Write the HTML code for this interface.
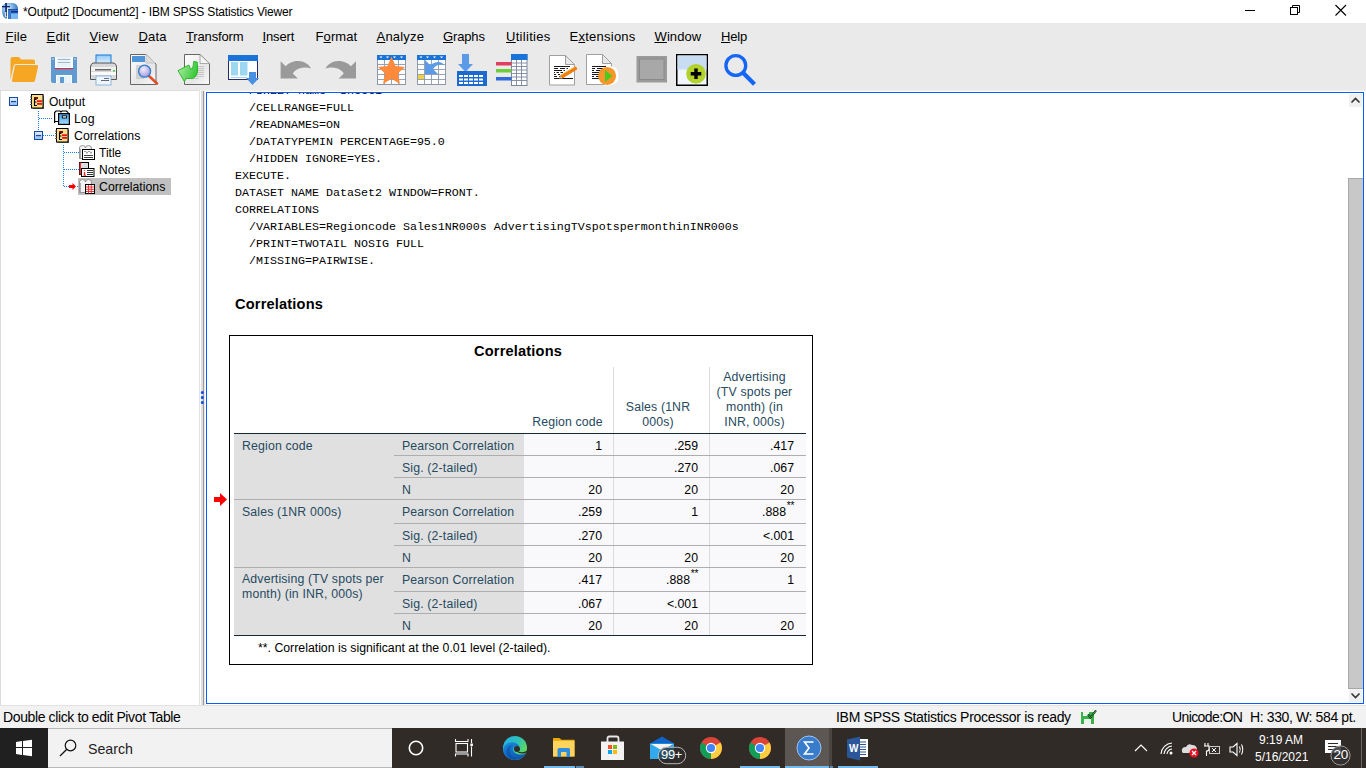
<!DOCTYPE html>
<html><head><meta charset="utf-8">
<style>
*{margin:0;padding:0;box-sizing:border-box}
html,body{width:1366px;height:768px;overflow:hidden;background:#fff;font-family:"Liberation Sans",sans-serif;position:relative}
.a{position:absolute}
.t{position:absolute;white-space:nowrap;line-height:20px}
.mi{position:absolute;top:27px;font-size:13px;letter-spacing:-0.15px;color:#000;white-space:nowrap;line-height:20px}
.mi u{text-decoration:underline;text-underline-offset:1px;text-decoration-thickness:1px}
</style></head><body>
<div class="a" style="left:0;top:0;width:1366px;height:23px;background:#fff"></div>
<div class="a" style="left:0;top:23px;width:1366px;height:67px;background:#eaeaea"></div>
<div class="a" style="left:0;top:90px;width:1366px;height:615px;background:#f0f0f0"></div>
<div class="a" style="left:0;top:90px;width:199px;height:615px;background:#fff;border-left:1px solid #dcdcdc;border-top:1px solid #dcdcdc"></div>
<div class="a" style="left:199px;top:90px;width:1px;height:615px;background:#e3e3e3"></div>
<div class="a" style="left:200px;top:90px;width:1px;height:615px;background:#fff"></div>
<div class="a" style="left:201px;top:91px;width:2px;height:614px;background:#dedede"></div>
<div class="a" style="left:203px;top:91px;width:1px;height:614px;background:#9a9a9a"></div>
<div class="a" style="left:204px;top:91px;width:1px;height:614px;background:#e8e8e8"></div>
<div class="a" style="left:205px;top:91px;width:1361px;height:614px;background:#fff"></div>
<div class="a" style="left:206px;top:92px;width:1158px;height:612px;border:1px solid #0a5cff;background:#fff"></div>
<!-- TITLE BAR -->
<svg class="a" style="left:0;top:0" width="22" height="22" viewBox="0 0 22 22">
 <defs><radialGradient id="tg" cx="0.35" cy="0.3" r="0.8"><stop offset="0" stop-color="#d8ecfb"/><stop offset="0.5" stop-color="#6ea6dc"/><stop offset="1" stop-color="#1e5cae"/></radialGradient></defs>
 <path d="M2 7 Q3 3 8 3 H12 Q17 3 18 8 V19 H8 Q2 18 2 11 Z" fill="url(#tg)"/>
 <rect x="8" y="9" width="10" height="1" fill="#1e4fa0"/>
 <rect x="8" y="10" width="10" height="9" fill="#3c78c8"/>
 <rect x="11" y="11" width="7" height="1.5" fill="#0b2c84"/>
 <rect x="11" y="13.5" width="7" height="5.5" fill="#7ab8f5"/>
 <rect x="7" y="9" width="1" height="10" fill="#fff"/>
 <rect x="5.2" y="3" width="1.7" height="13" fill="#0b2270"/>
 <rect x="2" y="6" width="8" height="1.3" fill="#0b2270"/>
 <rect x="5.2" y="12" width="1" height="5" fill="#fff"/>
</svg>
<div class="a" style="left:23px;top:2px;font-size:12px;letter-spacing:-0.16px;line-height:20px;color:#000;white-space:nowrap">*Output2 [Document2] - IBM SPSS Statistics Viewer</div>
<svg class="a" style="left:1230px;top:0" width="136" height="22" viewBox="1230 0 136 22">
 <rect x="1245" y="10" width="10" height="1" fill="#000"/>
 <rect x="1290.5" y="7.5" width="7" height="7" fill="none" stroke="#000" stroke-width="1"/>
 <path d="M1292.5 7.5 V5.5 H1299.5 V12.5 H1297.5" fill="none" stroke="#000" stroke-width="1"/>
 <path d="M1335.5 5 L1346 15.5 M1346 5 L1335.5 15.5" stroke="#000" stroke-width="1.1"/>
</svg>
<!-- MENU -->
<div class="mi" style="left:5.5px;letter-spacing:0.2px"><u>F</u>ile</div>
<div class="mi" style="left:46.5px;letter-spacing:0.2px"><u>E</u>dit</div>
<div class="mi" style="left:89.5px;letter-spacing:0.35px"><u>V</u>iew</div>
<div class="mi" style="left:138.5px;letter-spacing:0.2px"><u>D</u>ata</div>
<div class="mi" style="left:186px"><u>T</u>ransform</div>
<div class="mi" style="left:262.5px"><u>I</u>nsert</div>
<div class="mi" style="left:315.5px;letter-spacing:0.1px">F<u>o</u>rmat</div>
<div class="mi" style="left:376.5px;letter-spacing:0.2px"><u>A</u>nalyze</div>
<div class="mi" style="left:443px"><u>G</u>raphs</div>
<div class="mi" style="left:506px;letter-spacing:0.3px"><u>U</u>tilities</div>
<div class="mi" style="left:569.5px;letter-spacing:0.25px">E<u>x</u>tensions</div>
<div class="mi" style="left:654.5px;letter-spacing:0.1px"><u>W</u>indow</div>
<div class="mi" style="left:721px"><u>H</u>elp</div>
<!-- TOOLBAR -->
<svg class="a" style="left:0;top:48px" width="770" height="42" viewBox="0 48 770 42">
 <defs>
  <linearGradient id="pg" x1="0" y1="0" x2="1" y2="1"><stop offset="0" stop-color="#fff"/><stop offset="0.6" stop-color="#e6e6e6"/><stop offset="1" stop-color="#fafafa"/></linearGradient>
  <linearGradient id="bl" x1="0" y1="0" x2="0" y2="1"><stop offset="0" stop-color="#8cc8f8"/><stop offset="1" stop-color="#eef8ff"/></linearGradient>
  <linearGradient id="gr" x1="0" y1="0.3" x2="1" y2="0.7"><stop offset="0" stop-color="#a8eca0"/><stop offset="1" stop-color="#2cc42c"/></linearGradient>
  <radialGradient id="mg" cx="0.4" cy="0.35" r="0.7"><stop offset="0" stop-color="#f4f0ff"/><stop offset="1" stop-color="#9f90d8"/></radialGradient>
 </defs>
 <!-- open folder -->
 <path d="M10.5 59 Q10.5 57 12.5 57 H19 L21 59.5 H33.5 Q35 59.5 35 61 V64 H16 Q14 64 13.5 66 L10.5 80 Z" fill="#f5a623"/>
 <path d="M15 65 H37 Q38.5 65 38 67 L35 80.5 Q34.5 82 33 82 H13.5 Q12 82 12 80.5 Z" fill="#f5a623"/>
 <!-- save -->
 <path d="M51 57 H77 V83 H52.5 L51 81.5 Z" fill="#5f9bd0"/>
 <rect x="55" y="57" width="18" height="11" fill="#fff"/>
 <rect x="57" y="57" width="14" height="10" fill="#e6f2fc"/>
 <rect x="58" y="59" width="12" height="1" fill="#aab4bc"/><rect x="58" y="62" width="12" height="1" fill="#aab4bc"/>
 <rect x="55" y="68" width="18" height="1.2" fill="#d9304a"/>
 <rect x="56" y="75" width="16" height="8" fill="#fff"/><rect x="57" y="76" width="14" height="7" fill="#e6f2fc"/>
 <rect x="60" y="77" width="4" height="6" fill="#5f9bd0"/>
 <rect x="52" y="58.5" width="2" height="1" fill="#cfe3f5"/><rect x="74" y="58.5" width="2" height="1" fill="#cfe3f5"/>
 <!-- printer -->
 <rect x="96" y="55" width="15" height="10" fill="url(#bl)" stroke="#1a78d8" stroke-width="1"/>
 <path d="M93 63 H114 Q116.5 64 116.5 67 V79.5 H90.5 V67 Q90.5 64 93 63 Z" fill="#d8d8d8" stroke="#555" stroke-width="1"/>
 <rect x="91" y="67" width="25" height="4" fill="#f2f2f2"/>
 <rect x="95" y="69" width="16" height="1.5" fill="#666"/>
 <rect x="113" y="70" width="2" height="1.5" fill="#3ecf3e"/>
 <rect x="91" y="72" width="25" height="3" fill="#fafafa"/>
 <rect x="96" y="76" width="15" height="9" fill="#eef6ff" stroke="#7aa8d8" stroke-width="0.8"/>
 <rect x="101" y="80" width="8" height="1" fill="#667"/><rect x="104" y="78" width="5" height="1" fill="#667"/>
 <!-- print preview -->
 <path d="M130.5 54.5 H146 L156 64 V84.5 H130.5 Z" fill="url(#pg)" stroke="#666" stroke-width="1"/>
 <path d="M146 54.5 V63 H155.5" fill="#ddd" stroke="#bbb" stroke-width="0.8"/>
 <rect x="132" y="56" width="13" height="6" fill="#4f95d8"/>
 <g stroke="#aaa" stroke-width="0.8"><path d="M136 66 H141 M136 68 H140 M136 70 H140 M136 72 H140 M136 74 H140 M136 76 H141 M136 78 H144"/></g>
 <path d="M149 76 L157 83.5" stroke="#e0502a" stroke-width="2.6" stroke-linecap="round"/>
 <circle cx="144.6" cy="71.2" r="6" fill="url(#mg)" stroke="#2f7fd0" stroke-width="1.3"/>
 <!-- export doc w/ green arrow -->
 <path d="M184.5 54.5 H200 L209.5 63.5 V84.5 H184.5 Z" fill="url(#pg)" stroke="#666" stroke-width="1"/>
 <path d="M200 54.5 V63.5 H209.5 Z" fill="#f4f4f4" stroke="#999" stroke-width="0.8"/>
 <g stroke="#bbb" stroke-width="0.8"><path d="M197 66.5 H204 M197 68.5 H204 M197 70.5 H204 M197 72.5 H204 M196 74.5 H204 M195 76.5 H204 M193 78.5 H199"/></g>
 <path d="M178 70.6 L188.8 65 L190.6 69 Q192.8 69.5 193.2 66 L193.7 61.5 L197.2 62 L197.7 70 Q197.5 76 192.8 78.5 L186.2 78.5 L184.4 81.6 Z" fill="url(#gr)" stroke="#22b022" stroke-width="0.9"/>
 <!-- window w/ arrow -->
 <rect x="228.5" y="55.5" width="29" height="24" fill="#fff" stroke="#262b6b" stroke-width="1"/>
 <rect x="228" y="55" width="30" height="6" fill="#1a73d9"/>
 <rect x="231" y="62" width="7" height="13.5" fill="#9dd8f0"/><rect x="240" y="62" width="7.5" height="13.5" fill="#9dd8f0"/>
 <rect x="231" y="77" width="16" height="1" fill="#9dd8f0"/>
 <path d="M249 72 H256 V78 H259 L252.5 85 L246 78 H249 Z" fill="#4a90e2"/>
 <!-- undo / redo -->
 <path id="undo" d="M280.6 61.3 L285.7 66.2 C289 62.5 294 61 298 61 C304 61 309 64.5 311 68.4 C307 67 303 67.2 299 68.5 C296 69.5 294 71.5 292.8 73.5 L297.9 78.6 L280.6 78.6 Z" fill="#9a9a9a"/>
 <path d="M280.6 61.3 L285.7 66.2 C289 62.5 294 61 298 61 C304 61 309 64.5 311 68.4 C307 67 303 67.2 299 68.5 C296 69.5 294 71.5 292.8 73.5 L297.9 78.6 L280.6 78.6 Z" fill="#9a9a9a" transform="translate(636.6 0) scale(-1 1)"/>
 <!-- star grid -->
 <rect x="377.5" y="55.5" width="28" height="29" fill="#fff" stroke="#8b97ad" stroke-width="1"/>
 <g stroke="#8b97ad" stroke-width="0.9"><path d="M377 64.5 H406 M377 69.5 H406 M377 74.5 H406 M377 79.5 H406 M384.5 59 V85 M391.5 59 V85 M398.5 59 V85"/></g>
 <rect x="377" y="55" width="29" height="5" fill="#1a73d9"/>
 <g fill="#fff"><path d="M379.5 56.5 h3 l-1.5 1.8z M386 56.5 h3 l-1.5 1.8z M393 56.5 h3 l-1.5 1.8z M400 56.5 h3 l-1.5 1.8z"/></g>
 <path d="M391.5 56.5 L395.5 66 L405 67 L397.8 73.5 L400 84 L391.5 78.8 L383 84 L385.2 73.5 L378 67 L387.5 66 Z" fill="#ff8a3c"/>
 <!-- grid w/ arrow -->
 <rect x="417.5" y="55.5" width="28" height="29" fill="#fff" stroke="#8b97ad" stroke-width="1"/>
 <g stroke="#8b97ad" stroke-width="0.9"><path d="M417 64.5 H446 M417 69.5 H446 M417 74.5 H446 M417 79.5 H446 M424.5 59 V85 M431.5 59 V85 M438.5 59 V85"/></g>
 <rect x="417" y="55" width="29" height="5" fill="#1a73d9"/>
 <g fill="#fff"><path d="M419.5 56.5 h3 l-1.5 1.8z M426 56.5 h3 l-1.5 1.8z M433 56.5 h3 l-1.5 1.8z M440 56.5 h3 l-1.5 1.8z"/></g>
 <rect x="418" y="75" width="6" height="4" fill="#f2d23c"/>
 <path d="M425 60 L425 74 L438 74 L433 69 Q437 63 444 65 Q440 59 430 65 Z" fill="#5a9ae6"/>
 <!-- download into grid -->
 <path d="M462 54 H469 V64 H473 L465.5 72 L458 64 H462 Z" fill="#5a9ae6"/>
 <rect x="457" y="71" width="30" height="15" fill="#1a6ad0"/>
 <g fill="#fff"><path d="M459 75h4v2h-4zM464 75h4v2h-4zM469 75h4v2h-4zM474 75h4v2h-4zM479 75h4v2h-4zM459 78.5h4v2h-4zM464 78.5h4v2h-4zM469 78.5h4v2h-4zM474 78.5h4v2h-4zM479 78.5h4v2h-4zM459 82h4v2h-4zM464 82h4v2h-4zM469 82h4v2h-4zM474 82h4v2h-4zM479 82h4v2h-4z"/></g>
 <!-- colored bars grid -->
 <rect x="511.5" y="54.5" width="15.5" height="31" fill="#fff" stroke="#7b87a0" stroke-width="1"/>
 <rect x="511" y="54" width="16.5" height="6" fill="#1a73d9"/>
 <g stroke="#7b87a0" stroke-width="0.9"><path d="M511 63 H527 M511 66.5 H527 M511 70 H527 M511 73.5 H527 M511 77 H527 M511 80.5 H527 M516.5 60 V86 M521.5 60 V86"/></g>
 <rect x="496" y="62" width="15.5" height="3.5" fill="#e0405e"/>
 <rect x="496" y="69" width="15.5" height="3.5" fill="#6ccd3a"/>
 <rect x="496" y="77" width="15.5" height="3.5" fill="#2e6bd8"/>
 <!-- doc pencil -->
 <path d="M549.5 55.5 H565.5 L574.5 64.5 V85 H549.5 Z" fill="#fff" stroke="#a0a0a0" stroke-width="1"/>
 <path d="M565.5 55.5 V64.5 H574.5 Z" fill="#e8e8e8" stroke="#a0a0a0" stroke-width="1"/>
 <g stroke="#1a1a1a" stroke-width="1.1"><path d="M554 66.5 H570 M554 68.5 H558 M560 68.5 H565 M566.5 68.5 H568 M554 70.5 H562 M563.5 70.5 H565 M554 72.5 H555 M556.5 72.5 H559 M560.5 72.5 H563 M554 74.5 H556 M558 74.5 H560 M554 76.5 H557 M559 76.5 H561 M554 78.5 H573"/></g>
 <path d="M560 75.5 L575 66.5 Q577.5 67 577 69.5 L562.5 78.5 Z" fill="#f07d10"/>
 <path d="M561 75 L575 66.8" stroke="#fbbf50" stroke-width="0.9"/>
 <path d="M560 75.5 L562.5 78.5 L559 78.5 Z" fill="#d8b890"/>
 <!-- doc play -->
 <path d="M586.5 54.5 H602.5 L611.5 63.5 V84.5 H586.5 Z" fill="#fff" stroke="#a0a0a0" stroke-width="1"/>
 <path d="M602.5 54.5 V63.5 H611.5 Z" fill="#e8e8e8" stroke="#a0a0a0" stroke-width="1"/>
 <g stroke="#1a1a1a" stroke-width="1.1"><path d="M592 66.5 H606 M592 68.5 H595 M597 68.5 H603 M592 70.5 H594 M596 70.5 H601 M592 72.5 H600 M592 74.5 H599 M592 76.5 H594 M596 76.5 H600 M592 78.5 H600"/></g>
 <path d="M611.5 66 Q618.5 67 618.5 76 Q618.5 85 609 85.5 H604 Z" fill="#fff"/>
 <circle cx="607.1" cy="75.9" r="9" fill="#f7962b"/>
 <path d="M605 70 L612.3 76 L605 82 Z" fill="#46cc1e"/>
 <!-- gray box -->
 <rect x="636.5" y="56" width="30.5" height="26.5" fill="#9a9a9a"/>
 <rect x="639.5" y="59" width="24.5" height="20.5" fill="#a8a8a8" stroke="#8a8a8a" stroke-width="1"/>
 <!-- box w/ plus -->
 <rect x="676" y="54" width="32" height="32" fill="#000"/>
 <rect x="677.5" y="55.5" width="29" height="29" fill="#f0f6fc"/>
 <rect x="677.5" y="55.5" width="29" height="14" fill="#c8dcf2"/>
 <circle cx="696" cy="73.8" r="9.8" fill="#b4d22c"/>
 <path d="M694.3 68.5 H697.7 V72.1 H701.3 V75.5 H697.7 V79.1 H694.3 V75.5 H690.7 V72.1 H694.3 Z" fill="#000"/>
 <!-- search -->
 <circle cx="735.8" cy="65.5" r="9.9" fill="none" stroke="#1466f5" stroke-width="3.3"/>
 <path d="M743 72.8 L754.5 84.3" stroke="#1466f5" stroke-width="4.2" stroke-linecap="butt"/>
</svg>
<!-- TREE -->
<div class="a" style="left:78px;top:178px;width:93px;height:17px;background:#c0c0c0"></div>
<svg class="a" style="left:0;top:90px" width="199" height="110" viewBox="0 90 199 110">
 <defs>
  <linearGradient id="ex" x1="0" y1="0" x2="0" y2="1"><stop offset="0" stop-color="#e6f1fd"/><stop offset="1" stop-color="#8fbdf0"/></linearGradient>
  <linearGradient id="bb" x1="0" y1="0" x2="0" y2="1"><stop offset="0" stop-color="#3a9ae8"/><stop offset="1" stop-color="#a8e0fc"/></linearGradient>
 </defs>
 <!-- dotted lines -->
 <g stroke="#1e7be6" stroke-width="1" stroke-dasharray="1 1">
  <path d="M38.5 111 V130"/><path d="M39 118.5 H53"/><path d="M43 135.5 H54"/>
  <path d="M63.5 145 V187"/><path d="M64 152.5 H79"/><path d="M64 169.5 H79"/><path d="M64 186.5 H69"/><path d="M77 186.5 H79"/>
 </g>
 <!-- expanders -->
 <rect x="9.5" y="97.5" width="8" height="8" fill="url(#ex)" stroke="#1848a8" stroke-width="1"/>
 <rect x="11" y="101" width="5" height="1.2" fill="#1848a8"/>
 <rect x="34.5" y="131.5" width="8" height="8" fill="url(#ex)" stroke="#1848a8" stroke-width="1"/>
 <rect x="36" y="135" width="5" height="1.2" fill="#1848a8"/>
 <!-- output book icons -->
 <g id="bk1">
  <rect x="31.5" y="94.5" width="11.5" height="13.5" fill="#f9e08e" stroke="#000" stroke-width="1"/>
  <path d="M43.5 95.5 V108.5 H32.5" fill="none" stroke="#333" stroke-width="1"/>
  <path d="M30 97 h2 M30 99.5 h2 M30 102 h2 M30 104.5 h2" stroke="#555" stroke-width="1"/>
  <rect x="34" y="97" width="4" height="2" fill="#7a0c0c"/>
  <path d="M34.5 99 V105.5 H37 M34.5 102 H36.5 M34.5 99.5 H36.5" stroke="#000" stroke-width="1.1" fill="none"/>
  <rect x="37" y="100.3" width="5" height="1.8" fill="#ee1111"/><rect x="37" y="103" width="5" height="1.8" fill="#ee1111"/>
 </g>
 <g transform="translate(25 34)">
  <rect x="31.5" y="94.5" width="11.5" height="13.5" fill="#f9e08e" stroke="#000" stroke-width="1"/>
  <path d="M43.5 95.5 V108.5 H32.5" fill="none" stroke="#333" stroke-width="1"/>
  <path d="M30 97 h2 M30 99.5 h2 M30 102 h2 M30 104.5 h2" stroke="#555" stroke-width="1"/>
  <rect x="34" y="97" width="4" height="2" fill="#7a0c0c"/>
  <path d="M34.5 99 V105.5 H37 M34.5 102 H36.5 M34.5 99.5 H36.5" stroke="#000" stroke-width="1.1" fill="none"/>
  <rect x="37" y="100.3" width="5" height="1.8" fill="#ee1111"/><rect x="37" y="103" width="5" height="1.8" fill="#ee1111"/>
 </g>
 <!-- log icon -->
 <path d="M54.6 123 V112.5 L56 111 H60 L61 112 L62 111 H66.5 L68 112.5 V114" fill="#fff" stroke="#000" stroke-width="1.2"/>
 <path d="M54.6 121.5 H58.5" stroke="#000" stroke-width="1"/>
 <rect x="58.6" y="113.6" width="10.8" height="10.8" fill="url(#bb)" stroke="#000" stroke-width="1.2"/>
 <rect x="62.3" y="115.8" width="4.2" height="2.2" fill="#fff" stroke="#000" stroke-width="0.9"/>
 <!-- title icon -->
 <path d="M79.5 158.5 V148 Q79.5 145.5 82.5 145.5 Q85.5 145.5 85.5 148 Q85.5 145.5 88.5 145.5 Q91.5 145.5 91.5 148 V149.5 H82.5 V158.5 Z" fill="#f2f2f2" stroke="#8a8a8a" stroke-width="0.9"/>
 <path d="M80 149 V158.5" stroke="#9a9a9a" stroke-width="1.6"/>
 <rect x="82.5" y="149.5" width="12" height="10" fill="#fff" stroke="#000" stroke-width="1"/>
 <path d="M84 151.5 h2 l1 2 l1 -2 h2 l1 2 l1 -2" stroke="#666" stroke-width="0.6" fill="none"/>
 <path d="M84 155.5 h9 M84 157.5 h9" stroke="#444" stroke-width="1"/>
 <!-- notes icon -->
 <rect x="79.5" y="162.5" width="9" height="12" fill="#ddd" stroke="#000" stroke-width="1"/>
 <rect x="79.5" y="162.5" width="1.5" height="12" fill="#e33"/>
 
 <rect x="81.5" y="168.5" width="12.5" height="8" fill="#fff" stroke="#000" stroke-width="1"/>
 <path d="M84.5 170 v0.8 M84.5 172 v3" stroke="#e22" stroke-width="1.3"/><path d="M83.5 175.3 h2.5" stroke="#e22" stroke-width="0.9"/>
 <path d="M87 170.5 h6 M87 172.5 h6 M87 174.5 h6" stroke="#333" stroke-width="1"/>
 <!-- red arrow -->
 <path d="M69 185 H72.5 V183 L76 186.5 L72.5 190 V188 H69 Z" fill="#f00"/>
 <!-- correlations table icon -->
 <path d="M79.5 192.5 V182 Q79.5 179.5 82.5 179.5 Q85.5 179.5 85.5 182 Q85.5 179.5 88.5 179.5 Q91.5 179.5 91.5 182 V186 H85.5 V192.5 Z" fill="#f2f2f2" stroke="#8a8a8a" stroke-width="0.9"/>
 <path d="M80 183 V192.5" stroke="#9a9a9a" stroke-width="1.6"/>
 <rect x="85.5" y="184.5" width="9" height="9" fill="#fff" stroke="#000" stroke-width="1"/>
 <path d="M86 187 h8 M86 189.3 h8 M86 191.5 h8 M88.5 185 v8.5 M91.3 185 v8.5" stroke="#e22" stroke-width="0.9"/>
</svg>
<div class="a" style="left:49px;top:95px;font-size:12px;line-height:15px;white-space:nowrap">Output</div>
<div class="a" style="left:74px;top:112px;font-size:12.3px;line-height:15px;white-space:nowrap">Log</div>
<div class="a" style="left:74px;top:129px;font-size:12.3px;line-height:15px;white-space:nowrap">Correlations</div>
<div class="a" style="left:99px;top:146px;font-size:12px;line-height:15px;white-space:nowrap">Title</div>
<div class="a" style="left:99px;top:163px;font-size:12px;line-height:15px;white-space:nowrap">Notes</div>
<div class="a" style="left:99px;top:180px;font-size:12.3px;line-height:15px;white-space:nowrap">Correlations</div>
<!-- splitter grip dots -->
<svg class="a" style="left:199px;top:388px" width="6" height="20" viewBox="0 0 6 20"><g fill="#0a50f0"><circle cx="3.3" cy="4.5" r="1.5"/><circle cx="3.3" cy="9.5" r="1.5"/><circle cx="3.3" cy="14.5" r="1.5"/></g></svg>
<div class="a" id="vc" style="left:207px;top:93px;width:1156px;height:610px;overflow:hidden"><div class="a" style="left:-207px;top:-93px;width:1366px;height:768px">
<div class="a" style="left:229px;top:335px;width:584px;height:330px;border:1px solid #000;background:#fff"></div>
<div class="a" style="left:234px;top:434px;width:290px;height:201px;background:#e0e0e0"></div>
<div class="a" style="left:524px;top:434px;width:282px;height:201px;background:#f9f9fb"></div>
<div class="a" style="left:613px;top:367px;width:1px;height:268px;background:#dcdcdc"></div>
<div class="a" style="left:709px;top:367px;width:1px;height:268px;background:#dcdcdc"></div>
<div class="a" style="left:234px;top:433px;width:572px;height:1px;background:#152935"></div>
<div class="a" style="left:234px;top:635px;width:572px;height:1px;background:#152935"></div>
<div class="a" style="left:394px;top:455px;width:412px;height:1px;background:#aeaeae"></div>
<div class="a" style="left:394px;top:477px;width:412px;height:1px;background:#aeaeae"></div>
<div class="a" style="left:394px;top:523px;width:412px;height:1px;background:#aeaeae"></div>
<div class="a" style="left:394px;top:545px;width:412px;height:1px;background:#aeaeae"></div>
<div class="a" style="left:394px;top:591px;width:412px;height:1px;background:#aeaeae"></div>
<div class="a" style="left:394px;top:613px;width:412px;height:1px;background:#aeaeae"></div>
<div class="a" style="left:234px;top:499px;width:572px;height:1px;background:#aeaeae"></div>
<div class="a" style="left:234px;top:567px;width:572px;height:1px;background:#aeaeae"></div>
<svg class="a" style="left:212px;top:493px" width="16" height="14" viewBox="0 0 16 14"><path d="M2 4 H8 V0 L15 6.5 L8 13 V9 H2 Z" fill="#f00"/></svg>
<div class="t" style="top:81px;font-family:'Liberation Mono';font-size:11.67px;font-weight:400;color:#000;left:249px;">/SHEET name=&#x27;Sheet1&#x27;</div>
<div class="t" style="top:98px;font-family:'Liberation Mono';font-size:11.67px;font-weight:400;color:#000;left:249px;">/CELLRANGE=FULL</div>
<div class="t" style="top:115px;font-family:'Liberation Mono';font-size:11.67px;font-weight:400;color:#000;left:249px;">/READNAMES=ON</div>
<div class="t" style="top:132px;font-family:'Liberation Mono';font-size:11.67px;font-weight:400;color:#000;left:249px;">/DATATYPEMIN PERCENTAGE=95.0</div>
<div class="t" style="top:149px;font-family:'Liberation Mono';font-size:11.67px;font-weight:400;color:#000;left:249px;">/HIDDEN IGNORE=YES.</div>
<div class="t" style="top:166px;font-family:'Liberation Mono';font-size:11.67px;font-weight:400;color:#000;left:235px;">EXECUTE.</div>
<div class="t" style="top:183px;font-family:'Liberation Mono';font-size:11.67px;font-weight:400;color:#000;left:235px;">DATASET NAME DataSet2 WINDOW=FRONT.</div>
<div class="t" style="top:200px;font-family:'Liberation Mono';font-size:11.67px;font-weight:400;color:#000;left:235px;">CORRELATIONS</div>
<div class="t" style="top:217px;font-family:'Liberation Mono';font-size:11.67px;font-weight:400;color:#000;left:249px;">/VARIABLES=Regioncode Sales1NR000s AdvertisingTVspotspermonthinINR000s</div>
<div class="t" style="top:234px;font-family:'Liberation Mono';font-size:11.67px;font-weight:400;color:#000;left:249px;">/PRINT=TWOTAIL NOSIG FULL</div>
<div class="t" style="top:251px;font-family:'Liberation Mono';font-size:11.67px;font-weight:400;color:#000;left:249px;">/MISSING=PAIRWISE.</div>
<div class="t" style="top:294px;font-family:'Liberation Sans';font-size:14.6px;font-weight:700;color:#000;letter-spacing:0.17px;left:235px;">Correlations</div>
<div class="t" style="top:341px;font-family:'Liberation Sans';font-size:14.6px;font-weight:700;color:#000;letter-spacing:0.17px;left:368.0px;width:300px;text-align:center;">Correlations</div>
<div class="t" style="top:412px;font-family:'Liberation Sans';font-size:12.3px;font-weight:400;color:#264a60;letter-spacing:0.15px;left:417.5px;width:300px;text-align:center;">Region code</div>
<div class="t" style="top:397px;font-family:'Liberation Sans';font-size:12.3px;font-weight:400;color:#264a60;letter-spacing:0.15px;left:508.0px;width:300px;text-align:center;">Sales (1NR</div>
<div class="t" style="top:412px;font-family:'Liberation Sans';font-size:12.3px;font-weight:400;color:#264a60;letter-spacing:0.15px;left:508.0px;width:300px;text-align:center;">000s)</div>
<div class="t" style="top:367px;font-family:'Liberation Sans';font-size:12.3px;font-weight:400;color:#264a60;letter-spacing:0.15px;left:604.5px;width:300px;text-align:center;">Advertising</div>
<div class="t" style="top:382px;font-family:'Liberation Sans';font-size:12.3px;font-weight:400;color:#264a60;letter-spacing:0.15px;left:604.5px;width:300px;text-align:center;">(TV spots per</div>
<div class="t" style="top:397px;font-family:'Liberation Sans';font-size:12.3px;font-weight:400;color:#264a60;letter-spacing:0.15px;left:604.5px;width:300px;text-align:center;">month) (in</div>
<div class="t" style="top:412px;font-family:'Liberation Sans';font-size:12.3px;font-weight:400;color:#264a60;letter-spacing:0.15px;left:604.5px;width:300px;text-align:center;">INR, 000s)</div>
<div class="t" style="top:436px;font-family:'Liberation Sans';font-size:12.3px;font-weight:400;color:#264a60;letter-spacing:0.15px;left:402px;">Pearson Correlation</div>
<div class="t" style="top:458px;font-family:'Liberation Sans';font-size:12.3px;font-weight:400;color:#264a60;letter-spacing:0.15px;left:402px;">Sig. (2-tailed)</div>
<div class="t" style="top:480px;font-family:'Liberation Sans';font-size:12.3px;font-weight:400;color:#264a60;letter-spacing:0.15px;left:402px;">N</div>
<div class="t" style="top:502px;font-family:'Liberation Sans';font-size:12.3px;font-weight:400;color:#264a60;letter-spacing:0.15px;left:402px;">Pearson Correlation</div>
<div class="t" style="top:526px;font-family:'Liberation Sans';font-size:12.3px;font-weight:400;color:#264a60;letter-spacing:0.15px;left:402px;">Sig. (2-tailed)</div>
<div class="t" style="top:548px;font-family:'Liberation Sans';font-size:12.3px;font-weight:400;color:#264a60;letter-spacing:0.15px;left:402px;">N</div>
<div class="t" style="top:570px;font-family:'Liberation Sans';font-size:12.3px;font-weight:400;color:#264a60;letter-spacing:0.15px;left:402px;">Pearson Correlation</div>
<div class="t" style="top:594px;font-family:'Liberation Sans';font-size:12.3px;font-weight:400;color:#264a60;letter-spacing:0.15px;left:402px;">Sig. (2-tailed)</div>
<div class="t" style="top:616px;font-family:'Liberation Sans';font-size:12.3px;font-weight:400;color:#264a60;letter-spacing:0.15px;left:402px;">N</div>
<div class="t" style="top:436px;font-family:'Liberation Sans';font-size:12.3px;font-weight:400;color:#264a60;letter-spacing:0.15px;left:242px;">Region code</div>
<div class="t" style="top:502px;font-family:'Liberation Sans';font-size:12.3px;font-weight:400;color:#264a60;letter-spacing:0.15px;left:242px;">Sales (1NR 000s)</div>
<div class="t" style="top:569px;font-family:'Liberation Sans';font-size:12.3px;font-weight:400;color:#264a60;letter-spacing:0.15px;left:242px;">Advertising (TV spots per</div>
<div class="t" style="top:584px;font-family:'Liberation Sans';font-size:12.3px;font-weight:400;color:#264a60;letter-spacing:0.15px;left:242px;">month) (in INR, 000s)</div>
<div class="t" style="top:436px;font-family:'Liberation Sans';font-size:12.3px;font-weight:400;color:#000;left:522px;width:80px;text-align:right;">1</div>
<div class="t" style="top:436px;font-family:'Liberation Sans';font-size:12.3px;font-weight:400;color:#000;left:618px;width:80px;text-align:right;">.259</div>
<div class="t" style="top:436px;font-family:'Liberation Sans';font-size:12.3px;font-weight:400;color:#000;left:714px;width:80px;text-align:right;">.417</div>
<div class="t" style="top:458px;font-family:'Liberation Sans';font-size:12.3px;font-weight:400;color:#000;left:618px;width:80px;text-align:right;">.270</div>
<div class="t" style="top:458px;font-family:'Liberation Sans';font-size:12.3px;font-weight:400;color:#000;left:714px;width:80px;text-align:right;">.067</div>
<div class="t" style="top:480px;font-family:'Liberation Sans';font-size:12.3px;font-weight:400;color:#000;left:522px;width:80px;text-align:right;">20</div>
<div class="t" style="top:480px;font-family:'Liberation Sans';font-size:12.3px;font-weight:400;color:#000;left:618px;width:80px;text-align:right;">20</div>
<div class="t" style="top:480px;font-family:'Liberation Sans';font-size:12.3px;font-weight:400;color:#000;left:714px;width:80px;text-align:right;">20</div>
<div class="t" style="top:502px;font-family:'Liberation Sans';font-size:12.3px;font-weight:400;color:#000;left:522px;width:80px;text-align:right;">.259</div>
<div class="t" style="top:502px;font-family:'Liberation Sans';font-size:12.3px;font-weight:400;color:#000;left:618px;width:80px;text-align:right;">1</div>
<div class="t" style="top:502px;font-family:'Liberation Sans';font-size:12.3px;font-weight:400;color:#000;left:706px;width:80px;text-align:right;">.888</div>
<div class="t" style="top:496px;font-family:'Liberation Sans';font-size:10px;font-weight:400;color:#000;left:774.5px;width:20px;text-align:right;">**</div>
<div class="t" style="top:526px;font-family:'Liberation Sans';font-size:12.3px;font-weight:400;color:#000;left:522px;width:80px;text-align:right;">.270</div>
<div class="t" style="top:526px;font-family:'Liberation Sans';font-size:12.3px;font-weight:400;color:#000;left:714px;width:80px;text-align:right;">&lt;.001</div>
<div class="t" style="top:548px;font-family:'Liberation Sans';font-size:12.3px;font-weight:400;color:#000;left:522px;width:80px;text-align:right;">20</div>
<div class="t" style="top:548px;font-family:'Liberation Sans';font-size:12.3px;font-weight:400;color:#000;left:618px;width:80px;text-align:right;">20</div>
<div class="t" style="top:548px;font-family:'Liberation Sans';font-size:12.3px;font-weight:400;color:#000;left:714px;width:80px;text-align:right;">20</div>
<div class="t" style="top:570px;font-family:'Liberation Sans';font-size:12.3px;font-weight:400;color:#000;left:522px;width:80px;text-align:right;">.417</div>
<div class="t" style="top:570px;font-family:'Liberation Sans';font-size:12.3px;font-weight:400;color:#000;left:610px;width:80px;text-align:right;">.888</div>
<div class="t" style="top:564px;font-family:'Liberation Sans';font-size:10px;font-weight:400;color:#000;left:678.5px;width:20px;text-align:right;">**</div>
<div class="t" style="top:570px;font-family:'Liberation Sans';font-size:12.3px;font-weight:400;color:#000;left:714px;width:80px;text-align:right;">1</div>
<div class="t" style="top:594px;font-family:'Liberation Sans';font-size:12.3px;font-weight:400;color:#000;left:522px;width:80px;text-align:right;">.067</div>
<div class="t" style="top:594px;font-family:'Liberation Sans';font-size:12.3px;font-weight:400;color:#000;left:618px;width:80px;text-align:right;">&lt;.001</div>
<div class="t" style="top:616px;font-family:'Liberation Sans';font-size:12.3px;font-weight:400;color:#000;left:522px;width:80px;text-align:right;">20</div>
<div class="t" style="top:616px;font-family:'Liberation Sans';font-size:12.3px;font-weight:400;color:#000;left:618px;width:80px;text-align:right;">20</div>
<div class="t" style="top:616px;font-family:'Liberation Sans';font-size:12.3px;font-weight:400;color:#000;left:714px;width:80px;text-align:right;">20</div>
<div class="t" style="top:638px;font-family:'Liberation Sans';font-size:12.3px;font-weight:400;color:#000;left:258px;">**. Correlation is significant at the 0.01 level (2-tailed).</div></div></div>
<div class="a" style="left:1349px;top:94px;width:13px;height:13px;background:#f0f0f0"></div>
<svg class="a" style="left:1349px;top:94px" width="13" height="13" viewBox="0 0 13 13"><path d="M2.5 8.5 L6.5 4.5 L10.5 8.5" fill="none" stroke="#333" stroke-width="1.6"/></svg>
<div class="a" style="left:1348px;top:178px;width:15px;height:511px;background:#c8c8c8;border:1px solid #a8a8a8;border-right:none"></div>
<div class="a" style="left:1349px;top:689px;width:13px;height:13px;background:#f0f0f0"></div>
<svg class="a" style="left:1349px;top:689px" width="13" height="13" viewBox="0 0 13 13"><path d="M2.5 4.5 L6.5 8.5 L10.5 4.5" fill="none" stroke="#333" stroke-width="1.6"/></svg>
<!-- STATUS BAR -->
<div class="a" style="left:0;top:705px;width:1366px;height:23px;background:#f2f2f2;border-top:1px solid #e2e2e2"></div>
<div class="t" style="left:3px;top:707px;font-size:14px;letter-spacing:-0.38px;color:#000">Double click to edit Pivot Table</div>
<div class="t" style="left:836px;top:707px;font-size:14px;letter-spacing:-0.29px;color:#000">IBM SPSS Statistics Processor is ready</div>
<svg class="a" style="left:1080px;top:709px" width="17" height="16" viewBox="0 0 17 16">
 <rect x="1" y="3" width="13" height="12" fill="#3cb04a"/>
 <rect x="3" y="3" width="6" height="4" fill="#e8f5e8"/>
 <rect x="4" y="10" width="7" height="5" fill="#e8f5e8"/>
 <path d="M8 5.5 L10.5 8.5 L16 1.5" fill="none" stroke="#111" stroke-width="2"/>
 <path d="M8 5.5 L10.5 8.5 L16 1.5" fill="none" stroke="#2fc43f" stroke-width="1"/>
</svg>
<div class="t" style="left:1172px;top:707px;font-size:14px;letter-spacing:-0.6px;color:#000">Unicode:ON</div>
<div class="t" style="left:1250px;top:707px;font-size:14px;letter-spacing:-0.38px;color:#000">H: 330, W: 584 pt.</div>
<!-- TASKBAR -->
<div class="a" style="left:0;top:728px;width:1366px;height:40px;background:#302b27"></div>
<div class="a" style="left:0;top:728px;width:48px;height:40px;background:#202020"></div>
<svg class="a" style="left:14px;top:738px" width="20" height="20" viewBox="0 0 20 20">
 <path d="M2 3.9 L8 3.1 V9 H2 Z M9 2.9 L18 1.8 V9 H9 Z M2 10 H8 V17 L2 16.1 Z M9 10 H18 V18.2 L9 17.1 Z" fill="#fff"/>
</svg>
<div class="a" style="left:48px;top:728px;width:344px;height:40px;background:#f2f2f2;border-top:1px solid #b8b8b8;border-bottom:1px solid #b8b8b8"></div>
<svg class="a" style="left:56px;top:737px" width="24" height="24" viewBox="0 0 24 24">
 <circle cx="14.5" cy="8.5" r="5.3" fill="none" stroke="#111" stroke-width="1.2"/>
 <path d="M10.8 12.2 L4 19" stroke="#111" stroke-width="1.3"/>
</svg>
<div class="t" style="left:88px;top:739px;font-size:14.2px;color:#222;line-height:20px">Search</div>
<!-- cortana -->
<svg class="a" style="left:405px;top:737px" width="22" height="22" viewBox="0 0 22 22"><circle cx="11" cy="11" r="6.7" fill="none" stroke="#fff" stroke-width="1.6"/></svg>
<!-- task view -->
<svg class="a" style="left:453px;top:737px" width="22" height="22" viewBox="0 0 22 22">
 <path d="M2.5 2 V4.5 H15 V2 M2.5 19.5 V17 H15 V19.5" fill="none" stroke="#fff" stroke-width="1.1"/>
 <rect x="3" y="6.5" width="11.5" height="8.5" fill="none" stroke="#fff" stroke-width="1.1"/>
 <path d="M18.5 2 V6 M18.5 9.5 V19.5" stroke="#fff" stroke-width="1.1"/><rect x="17.3" y="6.5" width="2.6" height="2.6" fill="#fff"/>
</svg>
<!-- edge -->
<svg class="a" style="left:502px;top:735px" width="26" height="26" viewBox="0 0 26 26">
 <defs><linearGradient id="eg1" x1="0" y1="0" x2="1" y2="0.6"><stop offset="0" stop-color="#22b0f0"/><stop offset="0.55" stop-color="#2cc0b8"/><stop offset="1" stop-color="#66dc52"/></linearGradient>
 <linearGradient id="eg2" x1="0" y1="0" x2="0.6" y2="1"><stop offset="0" stop-color="#1c8ee0"/><stop offset="1" stop-color="#0c54b0"/></linearGradient></defs>
 <circle cx="13" cy="13" r="12" fill="url(#eg1)"/>
 <path d="M1.2 15 C1.5 9.5 7 6.5 12 7.5 C14.5 8 16.5 9.5 17.5 11.5 C14 10 11 11.5 11 14.5 C11 18 15.5 20 20 19.5 C22 19.3 23.5 18.5 24.5 17.5 C22.8 22 18.5 25 13 25 C6.5 25 1.2 20.5 1.2 15 Z" fill="url(#eg2)"/>
 <path d="M5 20 C3 16 5 10.5 11 9.5 C8 11.5 7.5 15 8.5 18 C9.5 21 12 23.5 15 24.8 C10.5 25.2 7 23 5 20 Z" fill="#0a4aa0" opacity="0.55"/>
 <circle cx="15" cy="14" r="3" fill="#302b27"/>
 <path d="M16 16.5 C19 17.6 22.5 17.3 25 15.5 L24.8 17.2 C22.5 18.8 19 19 16 17.6 Z" fill="#302b27"/>
</svg>
<!-- file explorer -->
<svg class="a" style="left:550px;top:736px" width="28" height="24" viewBox="0 0 28 24">
 <path d="M3 2 H9.5 L11.5 3.8 H24.5 V20.5 H3 Z" fill="#e8a800"/>
 <rect x="3" y="4.8" width="21.5" height="15.7" fill="#ffd45e"/>
 <path d="M7.5 21 V13.5 Q7.5 12 9 12 H18.5 Q20 12 20 13.5 V21 H16.5 V16 H11 V21 Z" fill="#2e8ee0"/>
</svg>
<div class="a" style="left:544px;top:766px;width:31px;height:2px;background:#76b9ed"></div>
<div class="a" style="left:576px;top:766px;width:8px;height:2px;background:#5a88b0"></div>
<!-- store -->
<svg class="a" style="left:599px;top:735px" width="28" height="27" viewBox="0 0 28 27">
 <path d="M8.5 9 V3.5 Q8.5 1.5 10.5 1.5 H17.5 Q19.5 1.5 19.5 3.5 V9" fill="none" stroke="#e8e8e8" stroke-width="1.8"/>
 <rect x="2" y="6.5" width="23" height="18.5" fill="#f2f2f2"/>
 <rect x="9" y="10" width="4" height="4" fill="#f35325"/><rect x="14" y="10" width="4" height="4" fill="#81bc06"/>
 <rect x="9" y="15" width="4" height="4" fill="#05a6f0"/><rect x="14" y="15" width="4" height="4" fill="#ffba08"/>
</svg>
<!-- mail -->
<svg class="a" style="left:648px;top:734px" width="42" height="32" viewBox="0 0 42 32">
 <path d="M2 9.5 L14 2.5 L26 9.5 V25 H2 Z" fill="#0f64c8"/>
 <path d="M2 9.5 H26 V25 H2 Z" fill="#33a8ea"/>
 <path d="M3 10 H25 L14 16.5 Z" fill="#f4f4f4"/>
 <rect x="10.3" y="13.3" width="27.4" height="16.4" rx="8.2" fill="rgba(45,45,45,0.72)" stroke="#b8b8b8" stroke-width="1"/>
</svg>
<div class="t" style="left:661px;top:745px;font-size:13px;font-weight:400;color:#fff;line-height:20px;letter-spacing:-0.3px">99+</div>
<!-- chrome x2 -->
<svg class="a" style="left:699px;top:736px" width="24" height="24" viewBox="0 0 24 24">
 <circle cx="12" cy="12" r="11" fill="#db4437"/>
 <path d="M12 12 L2.5 6.5 A11 11 0 0 0 12 23 Z" fill="#0f9d58"/>
 <path d="M12 12 L12 23 A11 11 0 0 0 21.5 6.5 Z" fill="#ffcd40"/>
 <path d="M12 12 L2.5 6.5 A11 11 0 0 0 2.5 6.5 Z" fill="#0f9d58"/>
 <circle cx="12" cy="12" r="5.2" fill="#fff"/><circle cx="12" cy="12" r="4.1" fill="#4285f4"/>
</svg>
<svg class="a" style="left:748px;top:736px" width="24" height="24" viewBox="0 0 24 24">
 <circle cx="12" cy="12" r="11" fill="#db4437"/>
 <path d="M12 12 L2.5 6.5 A11 11 0 0 0 12 23 Z" fill="#0f9d58"/>
 <path d="M12 12 L12 23 A11 11 0 0 0 21.5 6.5 Z" fill="#ffcd40"/>
 <circle cx="12" cy="12" r="5.2" fill="#fff"/><circle cx="12" cy="12" r="4.1" fill="#4285f4"/>
</svg>
<div class="a" style="left:740px;top:766px;width:40px;height:2px;background:#76b9ed"></div>
<!-- spss active -->
<div class="a" style="left:785px;top:728px;width:44px;height:40px;background:#5c5752"></div>
<div class="a" style="left:829px;top:728px;width:3px;height:40px;background:#4a4540"></div>
<svg class="a" style="left:796px;top:735px" width="26" height="26" viewBox="0 0 26 26">
 <circle cx="13" cy="13" r="12" fill="#3a7ccc" stroke="#9ec4f0" stroke-width="1"/>
 <path d="M17.5 7 H8.5 L13 13 L8.5 19 H17.5" fill="none" stroke="#fff" stroke-width="1.6"/>
</svg>
<div class="a" style="left:785px;top:766px;width:44px;height:2px;background:#76b9ed"></div>
<div class="a" style="left:830px;top:766px;width:3px;height:2px;background:#5a88b0"></div>
<!-- word -->
<svg class="a" style="left:845px;top:736px" width="26" height="25" viewBox="0 0 26 25">
 <rect x="11" y="3" width="12" height="18" fill="#fff"/>
 <path d="M13 6 H21 M13 8.5 H21 M13 11 H21 M13 13.5 H21 M13 16 H21 M13 18.5 H21" stroke="#2b579a" stroke-width="1"/>
 <path d="M2 3.5 L15 0.5 V24.5 L2 21.5 Z" fill="#2b579a"/>
 <text x="4" y="16" font-family="Liberation Sans" font-size="10" font-weight="700" fill="#fff">W</text>
</svg>
<div class="a" style="left:838px;top:766px;width:40px;height:2px;background:#76b9ed"></div>
<!-- tray -->
<svg class="a" style="left:1130px;top:738px" width="120" height="22" viewBox="1130 738 120 22">
 <path d="M1135 751 L1141 745 L1147 751" fill="none" stroke="#fff" stroke-width="1.2"/>
 <g fill="none" stroke="#fff" stroke-width="1.1"><path d="M1161 754 A12 12 0 0 1 1172 743"/><path d="M1164 754 A9 9 0 0 1 1172 746"/><path d="M1167 754 A6 6 0 0 1 1172 749"/></g>
 <circle cx="1171" cy="753" r="1.5" fill="#fff"/>
 <path d="M1182 752 Q1181 747 1186 747 Q1188 743 1192 745 Q1197 745 1197 750 L1196 753 H1183 Z" fill="#ddd"/>
 <circle cx="1194" cy="753" r="4.6" fill="#e81123"/>
 <path d="M1192 751 L1196 755 M1196 751 L1192 755" stroke="#fff" stroke-width="1.2"/>
 <path d="M1205 743 V746 M1208 743 V746 M1204 746 H1209 V749 Q1209 751 1206.5 751 V756" fill="none" stroke="#fff" stroke-width="1.1"/>
 <rect x="1209.5" y="746.5" width="10" height="7" fill="none" stroke="#ccc" stroke-width="1"/>
 <path d="M1212 748 L1216 752 M1216 748 L1212 752" stroke="#fff" stroke-width="1"/>
 <path d="M1230 747 H1233 L1237 743.5 V755.5 L1233 752 H1230 Z" fill="none" stroke="#fff" stroke-width="1.1"/>
 <path d="M1239.5 746.5 Q1241 749.5 1239.5 752.5 M1241.5 744.5 Q1244 749.5 1241.5 754.5" fill="none" stroke="#fff" stroke-width="1.1"/>
</svg>
<div class="t" style="left:1259px;top:730px;font-size:12px;color:#fff">9:19 AM</div>
<div class="t" style="left:1255px;top:747px;font-size:12px;color:#fff">5/16/2021</div>
<svg class="a" style="left:1320px;top:737px" width="44" height="31" viewBox="0 0 44 31">
 <rect x="5" y="3" width="16" height="13" fill="#fff"/>
 <path d="M8 6.5 H18 M8 9.5 H18 M8 12.5 H15" stroke="#302b27" stroke-width="1"/>
 <circle cx="20.5" cy="18.5" r="9.6" fill="rgba(50,50,50,0.85)" stroke="#9a9a9a" stroke-width="1"/>
</svg>
<div class="t" style="left:1333.5px;top:745px;font-size:13.5px;font-weight:400;color:#fff;letter-spacing:-0.2px">20</div>
<div class="a" style="left:1361px;top:728px;width:1px;height:40px;background:#6a6560"></div>
</body></html>
